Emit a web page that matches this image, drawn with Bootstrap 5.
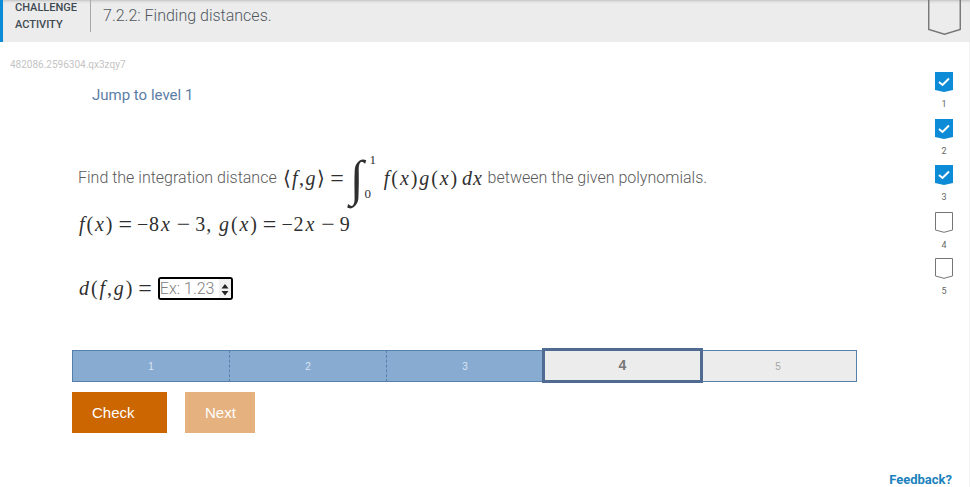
<!DOCTYPE html>
<html lang="en">
<head>
<meta charset="utf-8">
<title>7.2.2: Finding distances.</title>
<link href="https://cdn.jsdelivr.net/npm/bootstrap@5.3.0/dist/css/bootstrap.min.css" rel="stylesheet">
<style>
html,body{height:487px;overflow:hidden;background:#fff}
body{font-family:Roboto,"Liberation Sans",sans-serif;font-weight:300;color:#4a4a4a}
.act-head{height:42px;background:#ececec;border-left:3px solid #0d8bd6;box-shadow:inset 0 3px 3px -2px #bdbdbd;padding-right:9px}
.act-kind{width:87px;padding:0 0 0 12px;font-size:11px;line-height:16px;font-weight:500;color:#3f4a52}
.act-kind span{display:block}
.act-kind span+span{padding-top:1px}
.act-rule{width:1px;height:32px;background:#a8a8a8;margin-right:12px}
.act-title{font-size:16px;line-height:20px;margin-top:6px;color:#50585e}
.mark-big{display:block;margin-left:auto}
.main-area{height:445px;border-right:1px solid #f2f2f2}
.work{width:935px}
.code-id{font-size:10px;line-height:12px;color:#c4c4c4;margin:17px 0 0 10px;font-weight:400}
.jump{font-size:15px;line-height:20px;color:#5b7ea6;font-weight:400;margin:14px 0 0 92px}
.q-line{margin:48px 0 0 78px;height:50px;font-size:16px;color:#5a5a5a;white-space:nowrap}
.mth{font-family:"Liberation Serif",serif;font-size:20px;letter-spacing:.9px;color:#2f2f2f;font-weight:400;white-space:nowrap;display:inline-flex;align-items:center}
.mth i{font-style:italic;padding:0 1px}
.op{font-size:24px;line-height:1;margin:0 5px;letter-spacing:0}
.q-open{margin-left:2px;letter-spacing:.4px}
.int-wrap{margin:0 0 0 1px}
.int-sign{font-family:"Liberation Serif",serif;font-size:50px;line-height:50px;letter-spacing:0}
.limits{display:flex;flex-direction:column;justify-content:space-between;height:48px;margin-top:-3px;font-size:13px;line-height:14px;padding:0 0 0 6px}
.lim-low{margin-left:-5px}
.q-prod{margin-left:6px}
.q-dx{margin-left:3px}
.poly{margin:8px 0 0 78px;height:26px;line-height:26px}
.ans{margin:37px 0 0 78px;height:26px}
.ans-box{width:75px;height:23px;border:2px solid #000;border-radius:3px;margin-left:1px;font-family:Roboto,sans-serif;font-weight:300;font-size:16px;line-height:19px;color:#757575;background:#fff;overflow:hidden}
.ans-box input{border:0;outline:0;padding:0;width:59px;height:19px;font:inherit;background:#fff}
.ans-box input::placeholder{color:#808080;opacity:1}
.spin{flex:0 0 12px;background:#f0f0f0}
.lvl-bar{margin:49px 0 0 72px;width:785px;height:32px}
.lvl{flex:0 0 157px;display:flex;align-items:center;justify-content:center;font-size:10px;font-weight:400;font-family:"Liberation Sans",sans-serif;border-top:1px solid #5580ab;border-bottom:1px solid #5580ab}
.lvl-done{background:#88abd1;color:#dbe6f2}
.lvl-first{border-left:1px solid #5580ab;flex-basis:158px}
.lvl-sep{border-right:1px dashed #5580ab}
.lvl-third{flex-basis:156px}
.lvl-open{background:#ececec;color:#a5a5a5;border-right:1px solid #5580ab}
.lvl-now{background:#ececec;color:#777;font-size:14px;font-weight:700;border:3px solid #4f6b92;height:35px;margin-top:-2px;flex-basis:161px;margin-left:-1px;margin-right:-3px;position:relative}
.act-btns{margin:10px 0 0 72px;gap:18px}
.act-btn{height:41px;border-radius:0;border:0;color:#fff;font-size:15px;line-height:20px;font-weight:400;font-family:"Liberation Sans",sans-serif;padding:0 0 0 20px;text-align:left}
.btn-chk{width:95px;background:#cc6600}
.btn-nxt{width:70px;background:#e5b17f}
.btn-chk:hover,.btn-nxt:hover{color:#fff}
.btn-chk:hover{background:#cc6600}
.btn-nxt:hover{background:#e5b17f}
.fb-row{margin:39px 0 0 0;width:952px;text-align:right;font-size:13px;line-height:16px;font-weight:700;font-family:Roboto,sans-serif}
.fb-row a{color:#1b82bd;text-decoration:none}
.rail{width:18px;margin-top:30px}
.rail-item{height:46.5px;display:flex;flex-direction:column;align-items:center}
.rail-item svg{display:block}
.rail-num{font-size:9px;line-height:10px;margin-top:7px;color:#666;font-weight:400}
</style>
</head>
<body>
<header class="act-head d-flex align-items-start">
  <div class="act-kind"><span>CHALLENGE</span><span>ACTIVITY</span></div>
  <div class="act-rule"></div>
  <div class="act-title">7.2.2: Finding distances.</div>
  <svg class="mark-big" width="33" height="35" viewBox="0 0 33 35" aria-hidden="true"><path d="M.75 0V29.500L16.500 34.200 32.250 29.500V0" fill="none" stroke="#757575" stroke-width="1.400"/></svg>
</header>
<div class="main-area d-flex">
  <main class="work">
    <div class="code-id">482086.2596304.qx3zqy7</div>
    <div class="jump">Jump to level 1</div>
    <div class="q-line d-flex align-items-center">
      <span>Find the integration distance&nbsp;</span>
      <span class="mth q-open">⟨<i>f</i>,<i>g</i>⟩<span class="op">=</span></span>
      <span class="mth int-wrap"><span class="int-sign">∫</span><span class="limits"><span>1</span><span class="lim-low">0</span></span></span>
      <span class="mth q-prod"><i>f</i>(<i>x</i>)<i>g</i>(<i>x</i>)<i class="q-dx">dx</i></span>
      <span>&nbsp;between the given polynomials.</span>
    </div>
    <div class="poly mth"><i>f</i>(<i>x</i>)<span class="op">=</span>−8<i>x</i><span class="op">−</span>3,&nbsp;<i>g</i>(<i>x</i>)<span class="op">=</span>−2<i>x</i><span class="op">−</span>9</div>
    <div class="ans d-flex align-items-center">
      <span class="mth"><i>d</i>(<i>f</i>,<i>g</i>)<span class="op">=</span></span>
      <div class="ans-box d-flex">
        <input type="text" placeholder="Ex: 1.23" aria-label="d(f,g)">
        <span class="spin"><svg width="12" height="19" viewBox="0 0 12 19" aria-hidden="true"><path d="M6 4 9.500 8.500h-7zM6 15.500 2.500 11h7z" fill="#222"/></svg></span>
      </div>
    </div>
    <div class="lvl-bar d-flex">
      <div class="lvl lvl-done lvl-first lvl-sep">1</div>
      <div class="lvl lvl-done lvl-sep">2</div>
      <div class="lvl lvl-done lvl-third">3</div>
      <div class="lvl lvl-now">4</div>
      <div class="lvl lvl-open">5</div>
    </div>
    <div class="act-btns d-flex">
      <button type="button" class="btn act-btn btn-chk">Check</button>
      <button type="button" class="btn act-btn btn-nxt">Next</button>
    </div>
    <div class="fb-row"><a href="#">Feedback?</a></div>
  </main>
  <aside class="rail">
    <div class="rail-item"><svg width="18" height="20" viewBox="0 0 18 20" aria-hidden="true"><path d="M0 0H18V18L9 20 0 18z" fill="#0d8bd6"/><path d="M4 10l3.500 3L14 6.500" fill="none" stroke="#fff" stroke-width="2"/></svg><span class="rail-num">1</span></div>
    <div class="rail-item"><svg width="18" height="20" viewBox="0 0 18 20" aria-hidden="true"><path d="M0 0H18V18L9 20 0 18z" fill="#0d8bd6"/><path d="M4 10l3.500 3L14 6.500" fill="none" stroke="#fff" stroke-width="2"/></svg><span class="rail-num">2</span></div>
    <div class="rail-item"><svg width="18" height="20" viewBox="0 0 18 20" aria-hidden="true"><path d="M0 0H18V18L9 20 0 18z" fill="#0d8bd6"/><path d="M4 10l3.500 3L14 6.500" fill="none" stroke="#fff" stroke-width="2"/></svg><span class="rail-num">3</span></div>
    <div class="rail-item"><svg width="18" height="21" viewBox="0 0 18 21" aria-hidden="true"><path d="M.5 .5H17.500V18L9 20.300 .5 18z" fill="#fff" stroke="#757575"/></svg><span class="rail-num">4</span></div>
    <div class="rail-item"><svg width="18" height="21" viewBox="0 0 18 21" aria-hidden="true"><path d="M.5 .5H17.500V18L9 20.300 .5 18z" fill="#fff" stroke="#757575"/></svg><span class="rail-num">5</span></div>
  </aside>
</div>
</body>
</html>
